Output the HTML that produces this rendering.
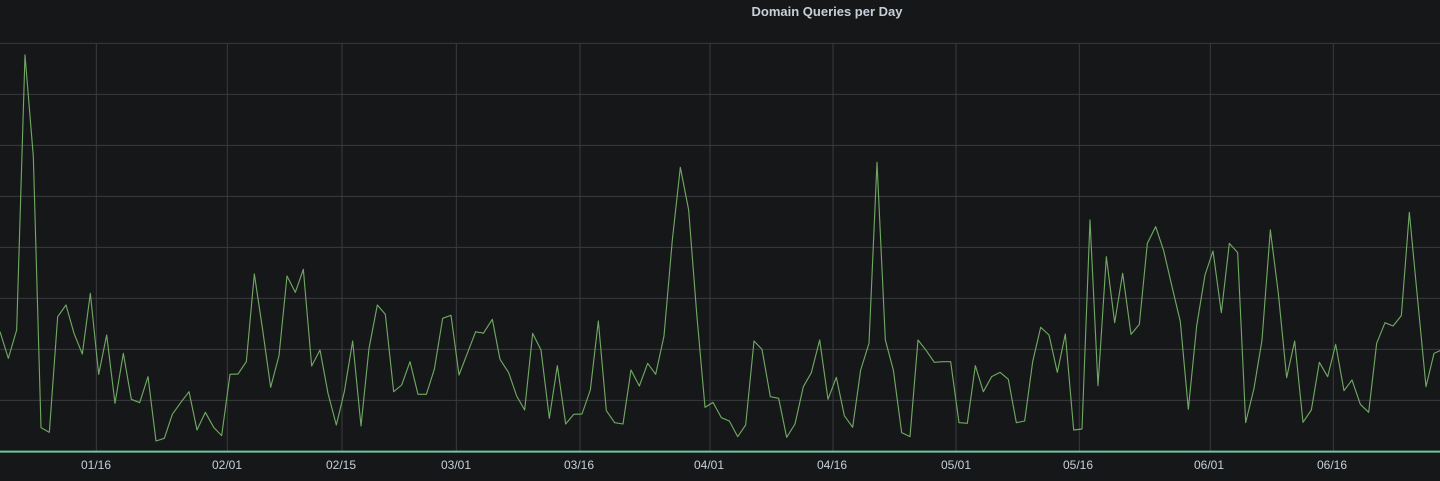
<!DOCTYPE html>
<html><head><meta charset="utf-8"><style>
html,body{margin:0;padding:0;background:#161719;width:1440px;height:481px;overflow:hidden}
.t{position:absolute;left:0;width:1654px;top:4px;text-align:center;font:bold 13px "Liberation Sans",sans-serif;color:#c7d0d9}
.l{position:absolute;top:458px;font:12px "Liberation Sans",sans-serif;color:#c7d0d9;transform:translateX(-50%)}
svg{position:absolute;left:0;top:0}
</style></head><body>
<div class="t">Domain Queries per Day</div>
<svg width="1440" height="481" viewBox="0 0 4320 1443">
<g stroke="#3a3b3e" stroke-width="3" fill="none">
<path d="M0 130H4320M0 283H4320M0 436H4320M0 589H4320M0 742H4320M0 895H4320M0 1048H4320M0 1201H4320"/>
<path d="M289 130V1355M682 130V1355M1026 130V1355M1369 130V1355M1740 130V1355M2130 130V1355M2499 130V1355M2868 130V1355M3238 130V1355M3631 130V1355M4000 130V1355"/>
</g>
<path d="M0 1355H4320" stroke="#6fc7a0" stroke-width="6"/>
<g fill="none" stroke="#6fa862" stroke-width="3.4" stroke-linejoin="round">
<polyline points="0,995 25,1075 50,990 75,165 100,470 123,1283 148,1297 173,950 198,915 222,1000 247,1062 271,880 296,1123 320,1005 345,1210 370,1060 394,1198 419,1208 444,1130 468,1323 493,1315 517,1243 542,1208 567,1175 591,1290 616,1237 641,1282 665,1307 690,1123 714,1122 739,1085 763,822 788,990 812,1162 837,1067 861,828 886,877 910,808 935,1098 960,1050 984,1180 1009,1275 1033,1175 1058,1023 1083,1278 1107,1045 1132,915 1156,943 1181,1175 1205,1155 1230,1085 1254,1183 1279,1183 1303,1108 1328,955 1353,946 1377,1125 1402,1060 1427,995 1440,998"/>
<polyline transform="translate(1440 0)" points="0,997 10,1000 37,958 60,1078 86,1118 110,1188 134,1230 158,1000 183,1050 208,1255 232,1097 257,1272 281,1243 306,1242 331,1170 355,963 379,1232 404,1268 429,1272 453,1110 478,1158 503,1090 527,1123 552,1008 577,720 601,502 626,630 650,940 675,1222 699,1207 724,1253 748,1263 773,1310 797,1275 822,1023 846,1048 871,1190 896,1195 920,1312 945,1272 970,1160 994,1118 1019,1020 1044,1198 1069,1132 1093,1247 1118,1282 1142,1110 1167,1030 1191,487 1216,1020 1240,1110 1265,1298 1290,1310 1314,1020 1339,1052 1363,1087 1388,1085 1412,1085 1437,1268 1440,1268"/>
<polyline transform="translate(2880 0)" points="0,1268 22,1270 46,1097 70,1175 95,1130 120,1117 145,1138 169,1268 194,1263 218,1085 242,982 267,1005 292,1117 316,1002 341,1290 366,1287 390,660 414,1157 439,770 464,968 488,820 513,1003 538,973 562,730 587,680 611,752 636,860 661,965 685,1228 710,978 735,825 759,753 784,938 808,730 833,758 857,1268 882,1165 906,1020 931,690 955,880 980,1133 1004,1023 1029,1267 1054,1230 1078,1087 1103,1130 1127,1033 1152,1172 1176,1140 1201,1213 1226,1237 1250,1030 1275,968 1299,978 1324,947 1348,637 1373,900 1398,1160 1422,1060 1440,1052"/>
</g>
</svg>
<div class="l" style="left:96px">01/16</div>
<div class="l" style="left:227px">02/01</div>
<div class="l" style="left:341px">02/15</div>
<div class="l" style="left:456px">03/01</div>
<div class="l" style="left:579px">03/16</div>
<div class="l" style="left:709px">04/01</div>
<div class="l" style="left:832px">04/16</div>
<div class="l" style="left:956px">05/01</div>
<div class="l" style="left:1078px">05/16</div>
<div class="l" style="left:1209px">06/01</div>
<div class="l" style="left:1332px">06/16</div>
</body></html>
